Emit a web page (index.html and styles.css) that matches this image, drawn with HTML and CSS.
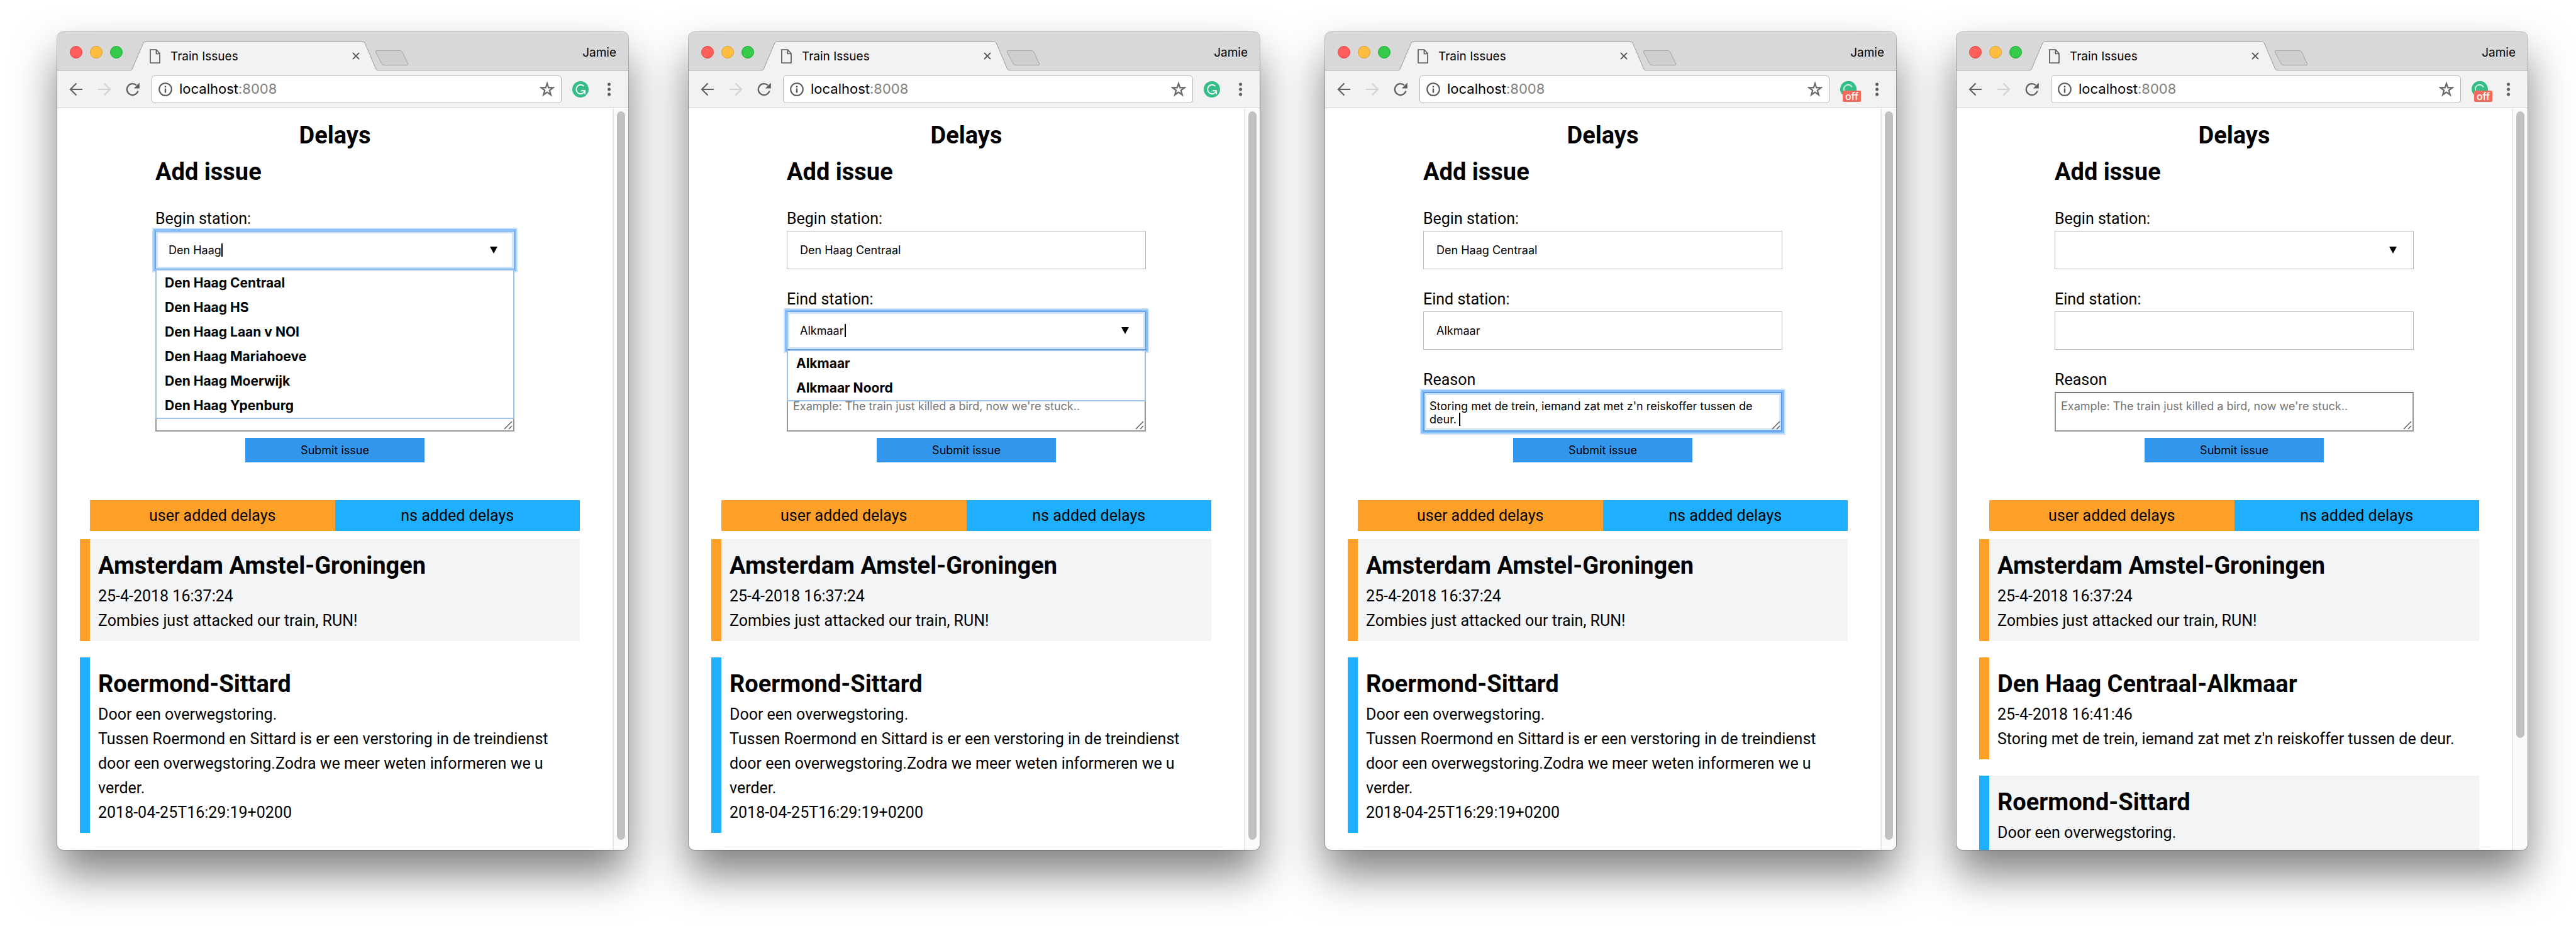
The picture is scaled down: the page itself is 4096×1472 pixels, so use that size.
FILE: index.html
```html
<!DOCTYPE html>
<html lang="nl">
<head>
<meta charset="utf-8">
<title>Train Issues</title>
<link rel="stylesheet" href="styles.css">
</head>
<body>
<svg class="sprite" aria-hidden="true">
  <symbol id="tab-shape" viewBox="0 0 393 46"><path d="M0 46V45.500Q1.500 45.500 2.500 43L20 2Q21 .5 23 .5H369Q371 .5 372 2L389.500 43Q390.500 45.500 393 45.500V46Z" fill="#f2f2f2"/><path d="M0 45.500Q1.500 45.500 2.500 43L20 2Q21 .5 23 .5H369Q371 .5 372 2L389.500 43Q390.500 45.500 393 45.500" fill="none" stroke="#999"/></symbol>
  <symbol id="new-tab" viewBox="0 0 54 26"><path d="M3 1.500H40Q43 1.500 44 4L52.500 22Q53.500 24.500 51 24.500H15Q12 24.500 11 22L1.500 4Q.5 1.500 3 1.500Z" fill="#cfcfcf" stroke="#a2a2a2"/></symbol>
  <symbol id="file" viewBox="0 0 17 23"><path d="M1 1H10.500L16 7V22H1ZM10.500 1V7.500H16" fill="none" stroke="#5a5a5a" stroke-width="1.700"/></symbol>
  <symbol id="close" viewBox="0 0 12 12"><path d="M1 1L11 11M11 1L1 11" fill="none" stroke="#5a5a5a" stroke-width="1.800"/></symbol>
  <symbol id="back" viewBox="0 0 22 22"><path d="M21 11H2M11.500 1.500L2 11L11.500 20.500" fill="none" stroke="currentColor" stroke-width="2.200"/></symbol>
  <symbol id="forward" viewBox="0 0 22 22"><path d="M1 11H20M10.500 1.500L20 11L10.500 20.500" fill="none" stroke="currentColor" stroke-width="2.200"/></symbol>
  <symbol id="reload" viewBox="0 0 22 22"><path d="M19.500 13.500A9 9 0 1 1 17 4.500" fill="none" stroke="currentColor" stroke-width="2.300"/><path d="M21.800 .5V9.500H12.800Z" fill="currentColor"/></symbol>
  <symbol id="info" viewBox="0 0 22 22"><circle cx="11" cy="11" r="9.800" fill="none" stroke="#5a5a5a" stroke-width="2.100"/><path d="M11 9.500V16.500M11 5.500V8" stroke="#5a5a5a" stroke-width="2.400"/></symbol>
  <symbol id="star" viewBox="0 0 24 24"><path d="M12 2.600L14.300 9.300L21.500 9.400L15.800 13.700L17.900 20.700L12 16.600L6.100 20.700L8.200 13.700L2.500 9.400L9.700 9.300Z" fill="none" stroke="#666" stroke-width="2.200"/></symbol>
  <symbol id="ext" viewBox="0 0 26 26"><circle cx="13" cy="13" r="13" fill="#34bd86"/><path d="M18.500 8.200A7 7.200 0 1 0 20 15M14 15.300H20V20.500" fill="none" stroke="#fff" stroke-width="1.900"/></symbol>
  <symbol id="ext-off" viewBox="0 0 26 26"><path d="M3 21A13 13 0 1 1 26 13V21Z" fill="#34bd86"/><path d="M6.500 16A7 7 0 0 1 19 9.500" fill="none" stroke="#d9f3e7" stroke-width="1.900"/></symbol>
  <symbol id="menu" viewBox="0 0 5 22"><circle cx="2.500" cy="2.900" r="2.500" fill="#5a5a5a"/><circle cx="2.500" cy="11" r="2.500" fill="#5a5a5a"/><circle cx="2.500" cy="19.100" r="2.500" fill="#5a5a5a"/></symbol>
  <symbol id="arrow" viewBox="0 0 12 11"><path d="M0 0H12L6 11Z"/></symbol>
  <symbol id="grip" viewBox="0 0 14 14"><path d="M1 13L13 1M8 13L13 8" fill="none" stroke="#5f5f5f" stroke-width="1.500"/></symbol>
</svg>

<main class="desktop">

  <section class="window">
    <header class="titlebar">
      <div class="lights"><button class="light red" aria-label="Close window"></button><button class="light amber" aria-label="Minimise"></button><button class="light green" aria-label="Zoom"></button></div>
      <div class="tab"><svg class="tab-bg"><use href="#tab-shape"/></svg><svg class="i-file"><use href="#file"/></svg><span class="tab-title">Train Issues</span><button class="icon-btn" aria-label="Close tab"><svg class="i-close"><use href="#close"/></svg></button></div>
      <button class="icon-btn new-tab" aria-label="New tab"><svg class="i-new"><use href="#new-tab"/></svg></button>
      <span class="profile">Jamie</span>
    </header>
    <div class="toolbar">
      <nav class="nav"><button class="icon-btn" aria-label="Back"><svg class="i-nav"><use href="#back"/></svg></button><button class="icon-btn faded" aria-label="Forward"><svg class="i-nav"><use href="#forward"/></svg></button><button class="icon-btn" aria-label="Reload"><svg class="i-nav"><use href="#reload"/></svg></button></nav>
      <div class="address"><svg class="i-nav"><use href="#info"/></svg><span class="url">localhost<span class="port">:8008</span></span><button class="icon-btn" aria-label="Bookmark"><svg class="i-star"><use href="#star"/></svg></button></div>
      <button class="icon-btn ext" aria-label="Extension"><svg class="i-ext"><use href="#ext"/></svg></button>
      <button class="icon-btn" aria-label="Menu"><svg class="i-menu"><use href="#menu"/></svg></button>
    </div>
    <div class="viewport">
      <div class="page">
        <h1 class="title">Delays</h1>
        <form class="issue-form">
          <h2 class="form-title">Add issue</h2>
          <div class="field">
            <label for="begin1">Begin station:</label>
            <div class="control"><input class="input focus" id="begin1" value="Den Haag"><span class="caret caret-haag"></span><svg class="i-arrow"><use href="#arrow"/></svg>
              <ul class="options"><li>Den Haag Centraal</li><li>Den Haag HS</li><li>Den Haag Laan v NOI</li><li>Den Haag Mariahoeve</li><li>Den Haag Moerwijk</li><li>Den Haag Ypenburg</li></ul>
            </div>
          </div>
          <div class="field"><label for="end1">Eind station:</label><div class="control"><input class="input" id="end1"></div></div>
          <div class="field"><label for="reason1">Reason</label><div class="control"><textarea class="reason" id="reason1" rows="2"></textarea><svg class="i-grip"><use href="#grip"/></svg></div></div>
          <button class="submit" type="button">Submit issue</button>
        </form>
        <div class="legend"><span class="by-user">user added delays</span><span class="by-ns">ns added delays</span></div>
        <ul class="delays">
          <li class="delay user"><h2>Amsterdam Amstel-Groningen</h2><p>25-4-2018 16:37:24</p><p>Zombies just attacked our train, RUN!</p></li>
          <li class="delay ns"><h2>Roermond-Sittard</h2><p>Door een overwegstoring.</p><p>Tussen Roermond en Sittard is er een verstoring in de treindienst door een overwegstoring.Zodra we meer weten informeren we u verder.</p><p>2018-04-25T16:29:19+0200</p></li>
        </ul>
      </div>
      <div class="scrollbar"><div class="thumb"></div></div>
    </div>
  </section>

  <section class="window">
    <header class="titlebar">
      <div class="lights"><button class="light red" aria-label="Close window"></button><button class="light amber" aria-label="Minimise"></button><button class="light green" aria-label="Zoom"></button></div>
      <div class="tab"><svg class="tab-bg"><use href="#tab-shape"/></svg><svg class="i-file"><use href="#file"/></svg><span class="tab-title">Train Issues</span><button class="icon-btn" aria-label="Close tab"><svg class="i-close"><use href="#close"/></svg></button></div>
      <button class="icon-btn new-tab" aria-label="New tab"><svg class="i-new"><use href="#new-tab"/></svg></button>
      <span class="profile">Jamie</span>
    </header>
    <div class="toolbar">
      <nav class="nav"><button class="icon-btn" aria-label="Back"><svg class="i-nav"><use href="#back"/></svg></button><button class="icon-btn faded" aria-label="Forward"><svg class="i-nav"><use href="#forward"/></svg></button><button class="icon-btn" aria-label="Reload"><svg class="i-nav"><use href="#reload"/></svg></button></nav>
      <div class="address"><svg class="i-nav"><use href="#info"/></svg><span class="url">localhost<span class="port">:8008</span></span><button class="icon-btn" aria-label="Bookmark"><svg class="i-star"><use href="#star"/></svg></button></div>
      <button class="icon-btn ext" aria-label="Extension"><svg class="i-ext"><use href="#ext"/></svg></button>
      <button class="icon-btn" aria-label="Menu"><svg class="i-menu"><use href="#menu"/></svg></button>
    </div>
    <div class="viewport">
      <div class="page">
        <h1 class="title">Delays</h1>
        <form class="issue-form">
          <h2 class="form-title">Add issue</h2>
          <div class="field"><label for="begin2">Begin station:</label><div class="control"><input class="input" id="begin2" value="Den Haag Centraal"></div></div>
          <div class="field">
            <label for="end2">Eind station:</label>
            <div class="control"><input class="input focus" id="end2" value="Alkmaar"><span class="caret caret-alkmaar"></span><svg class="i-arrow"><use href="#arrow"/></svg>
              <ul class="options"><li>Alkmaar</li><li>Alkmaar Noord</li></ul>
            </div>
          </div>
          <div class="field"><label for="reason2">Reason</label><div class="control"><textarea class="reason" id="reason2" rows="2" placeholder="Example: The train just killed a bird, now we're stuck.."></textarea><svg class="i-grip"><use href="#grip"/></svg></div></div>
          <button class="submit" type="button">Submit issue</button>
        </form>
        <div class="legend"><span class="by-user">user added delays</span><span class="by-ns">ns added delays</span></div>
        <ul class="delays">
          <li class="delay user"><h2>Amsterdam Amstel-Groningen</h2><p>25-4-2018 16:37:24</p><p>Zombies just attacked our train, RUN!</p></li>
          <li class="delay ns"><h2>Roermond-Sittard</h2><p>Door een overwegstoring.</p><p>Tussen Roermond en Sittard is er een verstoring in de treindienst door een overwegstoring.Zodra we meer weten informeren we u verder.</p><p>2018-04-25T16:29:19+0200</p></li>
        </ul>
      </div>
      <div class="scrollbar"><div class="thumb"></div></div>
    </div>
  </section>

  <section class="window spaced">
    <header class="titlebar">
      <div class="lights"><button class="light red" aria-label="Close window"></button><button class="light amber" aria-label="Minimise"></button><button class="light green" aria-label="Zoom"></button></div>
      <div class="tab"><svg class="tab-bg"><use href="#tab-shape"/></svg><svg class="i-file"><use href="#file"/></svg><span class="tab-title">Train Issues</span><button class="icon-btn" aria-label="Close tab"><svg class="i-close"><use href="#close"/></svg></button></div>
      <button class="icon-btn new-tab" aria-label="New tab"><svg class="i-new"><use href="#new-tab"/></svg></button>
      <span class="profile">Jamie</span>
    </header>
    <div class="toolbar">
      <nav class="nav"><button class="icon-btn" aria-label="Back"><svg class="i-nav"><use href="#back"/></svg></button><button class="icon-btn faded" aria-label="Forward"><svg class="i-nav"><use href="#forward"/></svg></button><button class="icon-btn" aria-label="Reload"><svg class="i-nav"><use href="#reload"/></svg></button></nav>
      <div class="address"><svg class="i-nav"><use href="#info"/></svg><span class="url">localhost<span class="port">:8008</span></span><button class="icon-btn" aria-label="Bookmark"><svg class="i-star"><use href="#star"/></svg></button></div>
      <button class="icon-btn ext" aria-label="Extension"><svg class="i-ext"><use href="#ext-off"/></svg><span class="badge">off</span></button>
      <button class="icon-btn" aria-label="Menu"><svg class="i-menu"><use href="#menu"/></svg></button>
    </div>
    <div class="viewport">
      <div class="page">
        <h1 class="title">Delays</h1>
        <form class="issue-form">
          <h2 class="form-title">Add issue</h2>
          <div class="field"><label for="begin3">Begin station:</label><div class="control"><input class="input" id="begin3" value="Den Haag Centraal"></div></div>
          <div class="field"><label for="end3">Eind station:</label><div class="control"><input class="input" id="end3" value="Alkmaar"></div></div>
          <div class="field"><label for="reason3">Reason</label><div class="control"><textarea class="reason focus" id="reason3" rows="2">Storing met de trein, iemand zat met z'n reiskoffer tussen de deur.</textarea><span class="caret caret-deur"></span><svg class="i-grip"><use href="#grip"/></svg></div></div>
          <button class="submit" type="button">Submit issue</button>
        </form>
        <div class="legend"><span class="by-user">user added delays</span><span class="by-ns">ns added delays</span></div>
        <ul class="delays">
          <li class="delay user"><h2>Amsterdam Amstel-Groningen</h2><p>25-4-2018 16:37:24</p><p>Zombies just attacked our train, RUN!</p></li>
          <li class="delay ns"><h2>Roermond-Sittard</h2><p>Door een overwegstoring.</p><p>Tussen Roermond en Sittard is er een verstoring in de treindienst door een overwegstoring.Zodra we meer weten informeren we u verder.</p><p>2018-04-25T16:29:19+0200</p></li>
        </ul>
      </div>
      <div class="scrollbar"><div class="thumb"></div></div>
    </div>
  </section>

  <section class="window">
    <header class="titlebar">
      <div class="lights"><button class="light red" aria-label="Close window"></button><button class="light amber" aria-label="Minimise"></button><button class="light green" aria-label="Zoom"></button></div>
      <div class="tab"><svg class="tab-bg"><use href="#tab-shape"/></svg><svg class="i-file"><use href="#file"/></svg><span class="tab-title">Train Issues</span><button class="icon-btn" aria-label="Close tab"><svg class="i-close"><use href="#close"/></svg></button></div>
      <button class="icon-btn new-tab" aria-label="New tab"><svg class="i-new"><use href="#new-tab"/></svg></button>
      <span class="profile">Jamie</span>
    </header>
    <div class="toolbar">
      <nav class="nav"><button class="icon-btn" aria-label="Back"><svg class="i-nav"><use href="#back"/></svg></button><button class="icon-btn faded" aria-label="Forward"><svg class="i-nav"><use href="#forward"/></svg></button><button class="icon-btn" aria-label="Reload"><svg class="i-nav"><use href="#reload"/></svg></button></nav>
      <div class="address"><svg class="i-nav"><use href="#info"/></svg><span class="url">localhost<span class="port">:8008</span></span><button class="icon-btn" aria-label="Bookmark"><svg class="i-star"><use href="#star"/></svg></button></div>
      <button class="icon-btn ext" aria-label="Extension"><svg class="i-ext"><use href="#ext-off"/></svg><span class="badge">off</span></button>
      <button class="icon-btn" aria-label="Menu"><svg class="i-menu"><use href="#menu"/></svg></button>
    </div>
    <div class="viewport">
      <div class="page">
        <h1 class="title">Delays</h1>
        <form class="issue-form">
          <h2 class="form-title">Add issue</h2>
          <div class="field"><label for="begin4">Begin station:</label><div class="control"><input class="input" id="begin4"><svg class="i-arrow"><use href="#arrow"/></svg></div></div>
          <div class="field"><label for="end4">Eind station:</label><div class="control"><input class="input" id="end4"></div></div>
          <div class="field"><label for="reason4">Reason</label><div class="control"><textarea class="reason" id="reason4" rows="2" placeholder="Example: The train just killed a bird, now we're stuck.."></textarea><svg class="i-grip"><use href="#grip"/></svg></div></div>
          <button class="submit" type="button">Submit issue</button>
        </form>
        <div class="legend"><span class="by-user">user added delays</span><span class="by-ns">ns added delays</span></div>
        <ul class="delays">
          <li class="delay user"><h2>Amsterdam Amstel-Groningen</h2><p>25-4-2018 16:37:24</p><p>Zombies just attacked our train, RUN!</p></li>
          <li class="delay user"><h2>Den Haag Centraal-Alkmaar</h2><p>25-4-2018 16:41:46</p><p>Storing met de trein, iemand zat met z'n reiskoffer tussen de deur.</p></li>
          <li class="delay ns"><h2>Roermond-Sittard</h2><p>Door een overwegstoring.</p></li>
        </ul>
      </div>
      <div class="scrollbar"><div class="thumb short"></div></div>
    </div>
  </section>

</main>
</body>
</html>
```
FILE: styles.css
```css
* { box-sizing: border-box; }

body {
  margin: 0;
  background: #fff;
  color: #000;
  font-family: Roboto, "Liberation Sans", sans-serif;
  font-size: 25px;
  line-height: 39px;
}

h1, h2, p, ul { margin: 0; padding: 0; }
ul { list-style: none; }
svg { display: block; }
.sprite { position: absolute; width: 0; height: 0; }

.desktop {
  display: flex;
  gap: 96px;
  height: 100vh;
  padding: 51px 77px 121px 91px;
  overflow: hidden;
}

/* browser window */
.window {
  flex: 1 1 0;
  min-width: 0;
  display: flex;
  flex-direction: column;
  border-radius: 9px;
  background: #fff;
  box-shadow: 0 0 0 1px rgba(0, 0, 0, .25), 0 38px 68px rgba(0, 0, 0, .5);
}
.window.spaced { margin-left: 8px; }

.titlebar {
  display: flex;
  align-items: center;
  height: 61px;
  padding: 0 19px 0 20px;
  border-radius: 9px 9px 0 0;
  background: #d8d8d8;
  box-shadow: inset 0 -1px #999;
  font-family: Inter, "Liberation Sans", sans-serif;
  font-size: 19px;
}
.lights { display: flex; gap: 12px; padding-top: 3px; }
.light {
  width: 20px;
  height: 20px;
  padding: 0;
  border: 1px solid;
  border-radius: 50%;
}
.red { background: #fe5f5a; border-color: #e24641; }
.amber { background: #febd41; border-color: #dfa031; }
.green { background: #34ca4a; border-color: #24ab35; }

.tab {
  position: relative;
  display: flex;
  align-items: center;
  align-self: flex-end;
  gap: 16px;
  width: 393px;
  height: 46px;
  margin-left: 13px;
  padding: 0 29px 0 30px;
}
.tab > * { position: relative; }
.tab > .tab-bg { position: absolute; inset: 0; width: 100%; height: 100%; }
.tab-title { flex: 1; }
.new-tab { align-self: flex-end; margin: 0 0 7px -5px; }
.profile { margin-left: auto; padding-top: 3px; }

.icon-btn {
  position: relative;
  flex: none;
  padding: 0;
  border: 0;
  background: none;
  color: #5f5f5f;
}
.faded { color: #d2d2d2; }
.i-file { width: 17px; height: 23px; }
.i-close { width: 12px; height: 12px; }
.i-new { width: 54px; height: 26px; }
.i-nav { flex: none; width: 22px; height: 22px; }
.i-star { width: 24px; height: 24px; }
.i-ext { width: 26px; height: 26px; }
.i-menu { width: 5px; height: 22px; }

.toolbar {
  display: flex;
  align-items: center;
  height: 60px;
  padding: 0 28px 0 19px;
  border-bottom: 1px solid #d0d0d0;
  background: #f2f2f2;
}
.nav { display: flex; gap: 23px; }
.address {
  flex: 1;
  display: flex;
  align-items: center;
  gap: 11px;
  height: 44px;
  margin: 0 17px 0 19px;
  padding: 0 10px;
  border: 1px solid #b5b5b5;
  border-radius: 5px;
  background: #fff;
  font-family: Inter, "Liberation Sans", sans-serif;
  font-size: 22px;
}
.url { flex: 1; }
.port { color: #808080; }
.ext { margin-right: 30px; }
.badge {
  position: absolute;
  left: 4px;
  top: 15px;
  width: 29px;
  height: 18px;
  border-radius: 2px;
  background: #f26a5c;
  color: #fff;
  font: 500 16px/18px Inter, "Liberation Sans", sans-serif;
  text-align: center;
}

/* page */
.viewport {
  flex: 1;
  min-height: 0;
  display: flex;
  overflow: hidden;
  border-radius: 0 0 9px 9px;
}
.page { flex: 1; min-width: 0; padding-top: 14px; }
.title, .form-title, .delay h2 {
  font-size: 38px;
  font-weight: 700;
  line-height: 58px;
}
.title { text-align: center; }

.issue-form {
  display: flex;
  flex-direction: column;
  padding: 0 156px;
}
.form-title { margin-bottom: 26px; }
.field { display: flex; flex-direction: column; margin-bottom: 28px; }
.field:nth-of-type(3) { margin-bottom: 10px; }
.control { position: relative; }
.input, .reason {
  display: block;
  width: 100%;
  border: 1px solid #bbb;
  border-radius: 0;
  outline: 0;
  background: #fff;
  color: #000;
  font-family: Inter, "Liberation Sans", sans-serif;
  font-size: 18px;
}
.input { height: 61px; padding: 0 20px; }
.reason {
  height: 63px;
  padding: 10px 8px 0;
  border: 2px solid #999;
  border-top-color: #767676;
  line-height: 21px;
  resize: none;
  overflow: hidden;
}
.reason::placeholder { color: #757575; }
.input.focus, .reason.focus {
  border-color: #5c9ce6;
  box-shadow: 0 0 0 3px #86bdfb, 0 0 0 5px #d0e5fd, inset 0 0 0 3px #cde2fb;
}
.caret { position: absolute; width: 2px; height: 21px; background: #000; }
.caret-haag { left: 105px; top: 20px; }
.caret-alkmaar { left: 92px; top: 20px; }
.caret-deur { left: 57px; top: 33px; }
.i-arrow { position: absolute; right: 27px; top: 25px; width: 12px; height: 11px; }
.i-grip { position: absolute; right: 3px; bottom: 3px; width: 14px; height: 14px; }

.options {
  position: absolute;
  z-index: 1;
  top: 100%;
  left: 0;
  right: 0;
  border: 2px solid #9dc2e9;
  background: #fff;
  font-family: Inter, "Liberation Sans", sans-serif;
  font-size: 21px;
  font-weight: 700;
}
.options li { padding-left: 13px; }

.submit {
  align-self: center;
  width: 50%;
  height: 39px;
  padding: 0;
  border: 0;
  background: #3296eb;
  color: #000;
  font-family: Inter, "Liberation Sans", sans-serif;
  font-size: 18px;
}

.legend {
  display: flex;
  margin: 60px 52px 13px;
  text-align: center;
}
.legend span { flex: 1; padding: 5px 0; }
.by-user { background: #ffa129; }
.by-ns { background: #1fafff; }

.delays {
  display: flex;
  flex-direction: column;
  gap: 26px;
  margin: 0 52px 0 36px;
}
.delay { padding: 13px; border-left: 16px solid; }
.delay:nth-child(odd) { background: #f3f4f6; }
.delay.user { border-color: #ffa129; }
.delay.ns { border-color: #1fafff; }

.scrollbar {
  width: 25px;
  padding: 5px 5px 16px;
  border-left: 2px solid #e8e8e8;
  background: #fafafa;
}
.thumb { width: 13px; height: 100%; border-radius: 7px; background: #c1c1c1; }
.thumb.short { height: 86%; }
```
